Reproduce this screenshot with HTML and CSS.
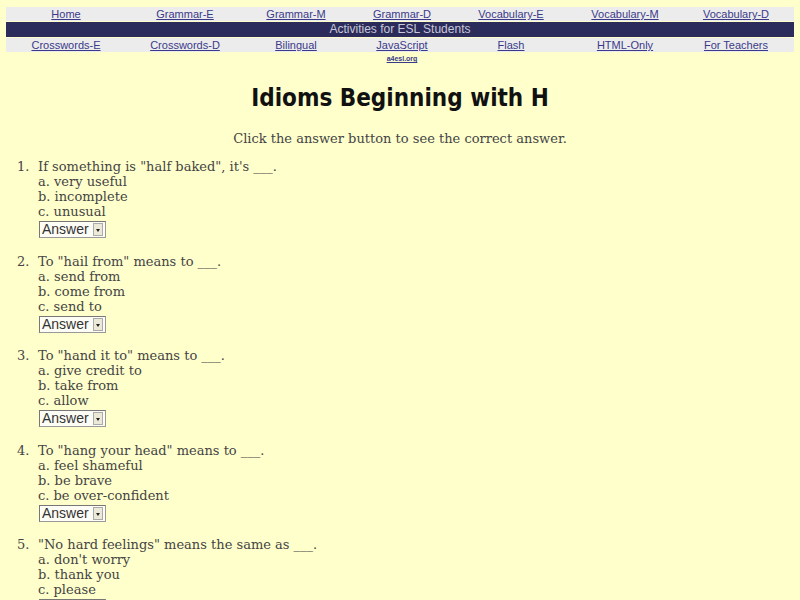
FILE: index.html
```html
<!DOCTYPE html>
<html>
<head>
<meta charset="utf-8">
<title>Idioms Beginning with H</title>
<link rel="stylesheet" href="styles.css">
</head>
<body>
<div class="nav">
  <div class="navrow">
    <a href="#">Home</a><a href="#">Grammar-E</a><a href="#">Grammar-M</a><a href="#">Grammar-D</a><a href="#">Vocabulary-E</a><a href="#">Vocabulary-M</a><a href="#">Vocabulary-D</a>
  </div>
  <div class="band">Activities for ESL Students</div>
  <div class="navrow">
    <a href="#">Crosswords-E</a><a href="#">Crosswords-D</a><a href="#">Bilingual</a><a href="#">JavaScript</a><a href="#">Flash</a><a href="#">HTML-Only</a><a href="#">For Teachers</a>
  </div>
  <div class="subrow">
    <span></span><span></span><span></span><a href="#">a4esl.org</a><span></span><span></span><span></span>
  </div>
</div>

<h1 class="title">Idioms Beginning with H</h1>
<p class="intro">Click the answer button to see the correct answer.</p>

<ol class="quiz">
  <li>
    <span class="num">1.</span>
    <div class="body">
      <div>If something is "half baked", it's ___.</div>
      <div>a. very useful</div>
      <div>b. incomplete</div>
      <div>c. unusual</div>
      <div class="sel"><span class="selbox">Answer<span class="arrow"></span></span></div>
    </div>
  </li>
  <li>
    <span class="num">2.</span>
    <div class="body">
      <div>To "hail from" means to ___.</div>
      <div>a. send from</div>
      <div>b. come from</div>
      <div>c. send to</div>
      <div class="sel"><span class="selbox">Answer<span class="arrow"></span></span></div>
    </div>
  </li>
  <li>
    <span class="num">3.</span>
    <div class="body">
      <div>To "hand it to" means to ___.</div>
      <div>a. give credit to</div>
      <div>b. take from</div>
      <div>c. allow</div>
      <div class="sel"><span class="selbox">Answer<span class="arrow"></span></span></div>
    </div>
  </li>
  <li>
    <span class="num">4.</span>
    <div class="body">
      <div>To "hang your head" means to ___.</div>
      <div>a. feel shameful</div>
      <div>b. be brave</div>
      <div>c. be over-confident</div>
      <div class="sel"><span class="selbox">Answer<span class="arrow"></span></span></div>
    </div>
  </li>
  <li>
    <span class="num">5.</span>
    <div class="body">
      <div>"No hard feelings" means the same as ___.</div>
      <div>a. don't worry</div>
      <div>b. thank you</div>
      <div>c. please</div>
      <div class="sel"><span class="selbox">Answer<span class="arrow"></span></span></div>
    </div>
  </li>
</ol>
</body>
</html>
```

FILE: styles.css
```css
html, body {
  margin: 0;
  padding: 0;
  background: #ffffcc;
}
body {
  font-family: "DejaVu Serif", serif;
  color: #444;
}
.nav {
  margin: 7px 6px 0 6px;
  display: flex;
  flex-direction: column;
  gap: 1px;
}
.navrow, .subrow {
  display: grid;
  grid-template-columns: 120px 118px 104px 108px 110px 118px 104px 1fr;
  text-align: center;
}
.navrow {
  background: #ececec;
  height: 14px;
  line-height: 14px;
}
.navrow a {
  font-family: "Liberation Sans", Arial, sans-serif;
  font-size: 11px;
  color: #3a3a8a;
  text-decoration: underline;
}
.band {
  background: #2c2c5c;
  color: #c8c8d8;
  height: 15px;
  line-height: 15px;
  text-align: center;
  font-family: "Liberation Sans", Arial, sans-serif;
  font-size: 12px;
}
.subrow {
  height: 10px;
  line-height: 11px;
}
.subrow a {
  font-family: "Liberation Sans", Arial, sans-serif;
  font-size: 7px;
  font-weight: bold;
  color: #3a3a8a;
  text-decoration: underline;
}
.title {
  margin: 20px 0 0 0;
  text-align: center;
  font-family: "DejaVu Sans Condensed", "DejaVu Sans", sans-serif;
  font-stretch: condensed;
  font-weight: bold;
  font-size: 24px;
  color: #111;
  line-height: 30px;
}
.intro {
  margin: 18px 0 0 0;
  text-align: center;
  font-size: 13px;
  line-height: 16px;
  color: #444;
}
.quiz {
  list-style: none;
  margin: 12px 0 0 0;
  padding-left: 17px;
  font-size: 13px;
  line-height: 15px;
}
.quiz li {
  display: grid;
  grid-template-columns: 21px 1fr;
  margin-bottom: 14.5px;
}
.sel {
  padding-top: 2px;
  height: 18px;
}
.selbox {
  display: inline-flex;
  align-items: center;
  margin-left: 1px;
  height: 15px;
  padding-left: 2px;
  padding-right: 2px;
  border: 1px solid #999;
  border-top-color: #777;
  border-left-color: #777;
  background: #fdfdf6;
  font-family: "Liberation Sans", Arial, sans-serif;
  font-size: 14px;
  color: #333;
  line-height: 15px;
}
.arrow {
  display: inline-block;
  width: 10px;
  height: 13px;
  margin-left: 4px;
  background: #ece9d8;
  border: 1px solid #aaa;
  box-sizing: border-box;
  position: relative;
}
.arrow::after {
  content: "";
  position: absolute;
  left: 2px;
  top: 5px;
  border-left: 2px solid transparent;
  border-right: 2px solid transparent;
  border-top: 3px solid #222;
}
```
